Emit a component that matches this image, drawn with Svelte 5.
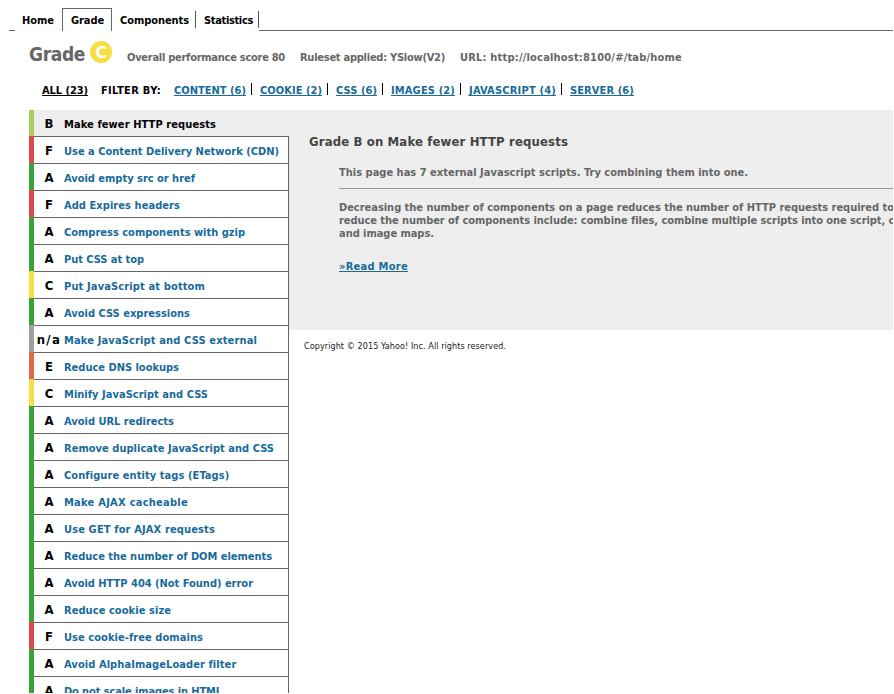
<script>
  const colors = { A: '#38a33c', B: '#a8cf5c', C: '#f8de42', E: '#e0684c', F: '#dc484c', 'n/a': '#a0a0a0' };
  const tabs = [
    { label: 'Home', width: 47, text: 32 },
    { label: 'Grade', width: 50, text: 33, active: true },
    { label: 'Components', width: 84, text: 69 },
    { label: 'Statistics', width: 63, text: 49 }
  ];
  const filters = [
    { label: 'CONTENT (6)', width: 72 },
    { label: 'COOKIE (2)', width: 62 },
    { label: 'CSS (6)', width: 41 },
    { label: 'IMAGES (2)', width: 64 },
    { label: 'JAVASCRIPT (4)', width: 87 },
    { label: 'SERVER (6)', width: 64 }
  ];
  const rules = [
    ['B', 'Make fewer HTTP requests', 152],
    ['F', 'Use a Content Delivery Network (CDN)', 215],
    ['A', 'Avoid empty src or href', 131],
    ['F', 'Add Expires headers', 116],
    ['A', 'Compress components with gzip', 181],
    ['A', 'Put CSS at top', 80],
    ['C', 'Put JavaScript at bottom', 141],
    ['A', 'Avoid CSS expressions', 126],
    ['n/a', 'Make JavaScript and CSS external', 193],
    ['E', 'Reduce DNS lookups', 115],
    ['C', 'Minify JavaScript and CSS', 144],
    ['A', 'Avoid URL redirects', 110],
    ['A', 'Remove duplicate JavaScript and CSS', 210],
    ['A', 'Configure entity tags (ETags)', 165],
    ['A', 'Make AJAX cacheable', 124],
    ['A', 'Use GET for AJAX requests', 151],
    ['A', 'Reduce the number of DOM elements', 208],
    ['A', 'Avoid HTTP 404 (Not Found) error', 189],
    ['A', 'Reduce cookie size', 107],
    ['F', 'Use cookie-free domains', 139],
    ['A', 'Avoid AlphaImageLoader filter', 172],
    ['A', 'Do not scale images in HTML', 158]
  ];

  // Tracks a line of text so that it spans the given width.
  function span(node, width) {
    const natural = node.getBoundingClientRect().width;
    node.style.letterSpacing = `${(width - natural) / node.textContent.length}px`;
  }
</script>

<div class="page">
  <nav class="tabs">
    <div class="stub"></div>
    {#each tabs as tab}
      <div class="tab" class:active={tab.active} style="width: {tab.width}px">
        <span use:span={tab.text}>{tab.label}</span>
      </div>
    {/each}
    <div class="rest"></div>
  </nav>

  <header>
    <h1><span use:span={56}>Grade</span></h1>
    <svg class="badge" width="22" height="22" viewBox="0 0 22 22">
      <circle cx="11" cy="11" r="11" fill="#f8de42" />
      <text x="11" y="17" text-anchor="middle">C</text>
    </svg>
    <div class="facts">
      <span use:span={158}>Overall performance score 80</span>
      <span use:span={145}>Ruleset applied: YSlow(V2)</span>
      <span use:span={222}>URL: http://localhost:8100/#/tab/home</span>
    </div>
  </header>

  <div class="filters">
    <a class="all" href="#all"><span use:span={46}>ALL (23)</span></a>
    <b><span use:span={60}>FILTER BY:</span></b>
    {#each filters as f, i}
      <a class="filter" href="#filter"><span use:span={f.width}>{f.label}</span></a>
      {#if i < filters.length - 1}<i></i>{/if}
    {/each}
  </div>

  <main>
    <ul>
      {#each rules as [grade, label, width], i}
        <li class:selected={i === 0}>
          <div class="bar" style="background: {colors[grade]}"></div>
          <div class="cell">
            <b class:na={grade === 'n/a'}>{grade}</b>
            <span use:span={width}>{label}</span>
          </div>
        </li>
      {/each}
    </ul>
    <section>
      <article>
        <h2><span use:span={259}>Grade B on Make fewer HTTP requests</span></h2>
        <div class="detail">
          <p><span use:span={409}>This page has 7 external Javascript scripts. Try combining them into one.</span></p>
          <hr />
          <p><span use:span={555}>Decreasing the number of components on a page reduces the number of HTTP requests required to</span></p>
          <p><span use:span={555}>reduce the number of components include: combine files, combine multiple scripts into one script, c</span></p>
          <p><span use:span={95}>and image maps.</span></p>
          <p class="more"><a href="#more"><span use:span={69}>»Read More</span></a></p>
        </div>
      </article>
      <footer><span use:span={202}>Copyright © 2015 Yahoo! Inc. All rights reserved.</span></footer>
    </section>
  </main>
</div>

<style>
  :global(body) { background: #fff; overflow: hidden; }
  .page {
    width: 893px; height: 693px; overflow: hidden; box-sizing: border-box;
    display: flex; flex-direction: column;
    font: bold 11px/13px 'DejaVu Sans Condensed', 'DejaVu Sans', sans-serif;
    font-stretch: condensed; color: #000;
  }
  span { white-space: nowrap; display: inline-block; }
  .tabs { display: flex; height: 31px; padding: 8px 0 0 9px; box-sizing: border-box; flex: none; }
  .stub { width: 6px; box-sizing: border-box; border-bottom: 1px solid #666; }
  .rest { flex: 1; border-bottom: 1px solid #666; }
  .tab { box-sizing: border-box; display: flex; padding-left: 7px; }
  .tab:not(.active) { margin-top: 3px; height: 17px; padding-top: 3px; }
  .tab:nth-child(n + 4) { border-right: 1px solid #555; padding-left: 8px; }
  .tab.active { height: 23px; border: 1px solid #666; border-bottom: 0; padding: 5px 0 0 8px; }
  header { display: flex; height: 51px; padding-left: 29px; flex: none; color: #666; }
  h1 { margin: 11px 5px 0 0; width: 56px; font-size: 19px; line-height: 24px; }
  .badge { margin-top: 10px; flex: none; }
  .badge text { font: bold 16px 'DejaVu Sans', sans-serif; fill: #fff; }
  .facts { display: flex; gap: 15px; padding: 20px 0 0 15px; }
  .filters { display: flex; height: 28px; padding-left: 42px; flex: none; line-height: 17px; }
  .filters a { text-decoration: none; border-bottom: 1px solid currentColor; height: 13px; }
  .filters b { margin: 0 13px; }
  .filters i { width: 1px; height: 12px; background: #000; margin: 1px 8px 0 5px; }
  a { color: #186a9a; }
  .filters .all { color: #000; }
  main { display: flex; flex: 1; min-height: 0; }
  ul { list-style: none; margin: 0; padding: 0 0 0 29px; width: 260px; flex: none; }
  li { display: flex; height: 27px; color: #186a9a; }
  .bar { width: 5px; }
  .cell {
    flex: 1; display: flex; box-sizing: border-box; padding-top: 8px;
    border-top: 1px solid #666; border-right: 1px solid #666;
  }
  .cell b { width: 30px; text-align: center; color: #000; font-size: 13px; line-height: 12px; }
  .cell .na { letter-spacing: 1.4px; }
  li.selected { height: 26px; color: #000; background: #eee; }
  .selected .cell { border: 0; }
  section { flex: 1; min-width: 0; }
  article { height: 220px; background: #eee; box-sizing: border-box; padding: 23px 0 0 20px; color: #666; overflow: hidden; }
  h2 { margin: 0; font-size: 13px; line-height: 17px; color: #444; }
  .detail { padding: 16px 0 0 30px; }
  p { margin: 0; height: 13px; }
  hr { margin: 9px 0 12px; border: 0; border-top: 1px solid #999; }
  .more { padding-top: 20px; }
  .more a { text-decoration: none; display: inline-block; height: 11px; border-bottom: 1px solid; }
  footer { padding: 9px 0 0 15px; font-weight: normal; font-size: 9px; line-height: 15px; color: #222; }
</style>
